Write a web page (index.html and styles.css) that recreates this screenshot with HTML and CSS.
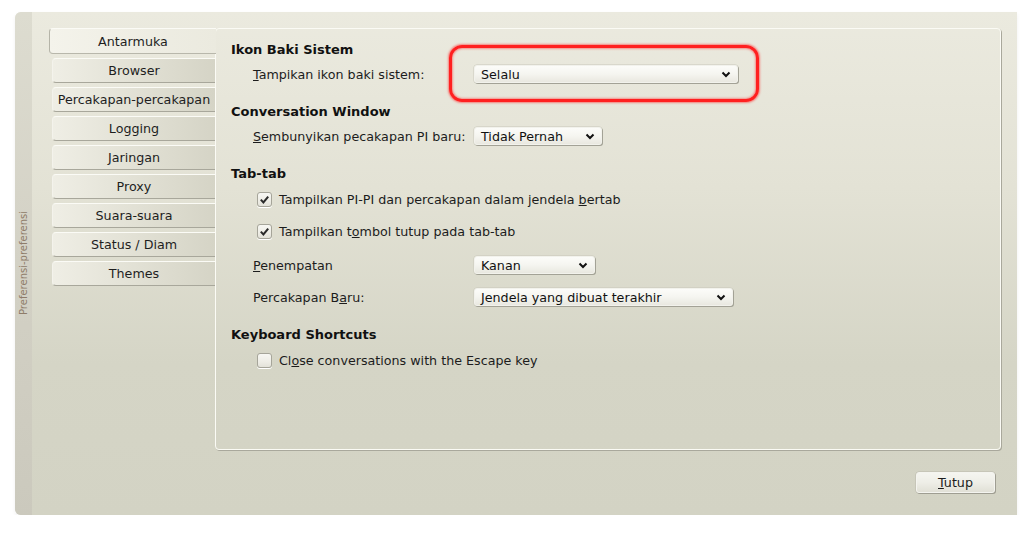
FILE: index.html
```html
<!DOCTYPE html>
<html>
<head>
<meta charset="utf-8">
<link rel="stylesheet" href="styles.css">
</head>
<body>
<div class="window">
  <div class="sidebar"><span class="vtitle">Preferensi-preferensi</span></div>
  <div class="main">
    <div class="top">
      <div class="tabs">
        <div class="tab active">Antarmuka</div>
        <div class="tab">Browser</div>
        <div class="tab">Percakapan-percakapan</div>
        <div class="tab">Logging</div>
        <div class="tab">Jaringan</div>
        <div class="tab">Proxy</div>
        <div class="tab">Suara-suara</div>
        <div class="tab">Status / Diam</div>
        <div class="tab">Themes</div>
      </div>
      <div class="panel">
        <div class="section">
          <div class="heading">Ikon Baki Sistem</div>
          <div class="row"><span class="label"><u>T</u>ampikan ikon baki sistem:</span><div class="combo w1"><span>Selalu</span><svg class="chev" width="10" height="7" viewBox="0 0 10 7"><path d="M1.5 1.5 L5 5 L8.5 1.5" fill="none" stroke="#111" stroke-width="2"/></svg></div></div>
        </div>
        <div class="section">
          <div class="heading">Conversation Window</div>
          <div class="row"><span class="label"><u>S</u>embunyikan pecakapan PI baru:</span><div class="combo w2"><span>Tidak Pernah</span><svg class="chev" width="10" height="7" viewBox="0 0 10 7"><path d="M1.5 1.5 L5 5 L8.5 1.5" fill="none" stroke="#111" stroke-width="2"/></svg></div></div>
        </div>
        <div class="section">
          <div class="heading">Tab-tab</div>
          <div class="check-row"><span class="cb checked"><svg width="15" height="15" viewBox="0 0 15 15"><path d="M3.8 7.6 L6.4 10.4 L11.2 4.6" fill="none" stroke="#2a2a2a" stroke-width="2"/></svg></span><span>Tampilkan PI-PI dan percakapan dalam jendela <u>b</u>ertab</span></div>
          <div class="check-row"><span class="cb checked"><svg width="15" height="15" viewBox="0 0 15 15"><path d="M3.8 7.6 L6.4 10.4 L11.2 4.6" fill="none" stroke="#2a2a2a" stroke-width="2"/></svg></span><span>Tampilkan t<u>o</u>mbol tutup pada tab-tab</span></div>
          <div class="row tall"><span class="label"><u>P</u>enempatan</span><div class="combo w3"><span>Kanan</span><svg class="chev" width="10" height="7" viewBox="0 0 10 7"><path d="M1.5 1.5 L5 5 L8.5 1.5" fill="none" stroke="#111" stroke-width="2"/></svg></div></div>
          <div class="row short"><span class="label">Percakapan B<u>a</u>ru:</span><div class="combo w4"><span>Jendela yang dibuat terakhir</span><svg class="chev" width="10" height="7" viewBox="0 0 10 7"><path d="M1.5 1.5 L5 5 L8.5 1.5" fill="none" stroke="#111" stroke-width="2"/></svg></div></div>
        </div>
        <div class="section last">
          <div class="heading">Keyboard Shortcuts</div>
          <div class="check-row"><span class="cb"></span><span>Cl<u>o</u>se conversations with the Escape key</span></div>
        </div>
      </div>
    </div>
    <div class="footer"><button class="btn"><u>T</u>utup</button></div>
  </div>
  <div class="highlight"></div>
</div>
</body>
</html>
```

FILE: styles.css
```css
html, body {
  margin: 0;
  padding: 0;
  background: #ffffff;
}
body {
  font-family: "DejaVu Sans", "Liberation Sans", sans-serif;
  font-size: 12.7px;
  color: #1c1c1c;
}
.window {
  position: relative;
  margin: 12px 0 0 15px;
  width: 1002px;
  height: 503px;
  display: flex;
  border-radius: 6px 0 0 6px;
  background: linear-gradient(to bottom, #ebeadf 0%, #e3e2d5 35%, #d5d5c6 70%, #d3d3c4 100%);
  box-shadow: 0 2px 4px rgba(0,0,0,0.06);
}
.sidebar {
  width: 17px;
  flex: none;
  border-radius: 6px 0 0 6px;
  background: linear-gradient(to bottom, #dddcd0 0%, #d3d1c5 50%, #cbc9bd 100%);
  display: flex;
  align-items: center;
  justify-content: center;
}
.vtitle {
  writing-mode: vertical-rl;
  transform: rotate(180deg);
  font-size: 10px;
  color: #8e7c69;
  margin-top: -2px;
}
.main {
  flex: 1;
  display: flex;
  flex-direction: column;
  padding: 16px 16px 0 17px;
}
.top {
  display: flex;
  height: 422px;
}
.tabs {
  width: 166px;
  flex: none;
  display: flex;
  flex-direction: column;
  gap: 4px;
}
.tab {
  height: 25px;
  margin-left: 3px;
  box-sizing: border-box;
  border-radius: 4px 0 0 4px;
  border-top: 1px solid #fbfbf6;
  border-left: 1px solid #f4f3ec;
  border-bottom: 1px solid #a8a79b;
  background: linear-gradient(to right, #efeee5 0%, #e2e1d5 50%, #d5d4c6 100%);
  display: flex;
  align-items: center;
  justify-content: center;
  color: #1e1e1e;
  white-space: nowrap;
}
.tab.active {
  height: 26px;
  margin-left: 0;
  margin-right: -1px;
  position: relative;
  z-index: 1;
  border-bottom: 1px solid #b8b7ab;
  border-left: 1px solid #b5b4a8;
  background: linear-gradient(to right, #f4f3eb 0%, #eeede3 60%, #ebeadf 100%);
}
.panel {
  flex: 1;
  box-sizing: border-box;
  border: 1px solid #fbfbf5;
  border-radius: 4px;
  box-shadow: 1px 1px 0 #a9a89c;
  padding: 10px 15px 0 15px;
  display: flex;
  flex-direction: column;
}
.section + .section {
  margin-top: 12px;
}
.section.last {
  margin-top: 13px;
}
.heading {
  height: 20px;
  line-height: 22px;
  font-size: 13px;
  font-weight: bold;
  color: #111;
}
.row {
  display: grid;
  grid-template-columns: 221px auto;
  align-items: center;
  padding-left: 22px;
  height: 30px;
}
.row.tall { height: 36px; }
.row.short { height: 28px; }
.label { white-space: nowrap; }
.combo {
  height: 18px;
  box-sizing: border-box;
  border-radius: 3px;
  border: 1px solid #f2f2ec;
  box-shadow: 1px 1px 0 #a3a296, 0 0 0 0.5px #c9c8bc;
  background: linear-gradient(to bottom, #fcfcf9 0%, #f5f5f0 50%, #e9e8e0 100%);
  display: flex;
  align-items: center;
  justify-content: space-between;
  padding: 0 6px 0 6px;
  color: #111;
  white-space: nowrap;
}
.w1 { width: 264px; }
.w2 { width: 128px; }
.w3 { width: 121px; }
.w4 { width: 259px; }
.chev { flex: none; margin-top: 1px; }
.check-row {
  display: flex;
  align-items: center;
  height: 32px;
  padding-left: 26px;
  gap: 7px;
  white-space: nowrap;
}
.cb {
  width: 15px;
  height: 15px;
  box-sizing: border-box;
  border-radius: 3px;
  border: 1px solid #a6a59a;
  background: linear-gradient(to bottom, #f7f7f3 0%, #eeede6 60%, #e3e2d9 100%);
  box-shadow: 0 1px 0 #ffffff;
  display: flex;
  align-items: center;
  justify-content: center;
  flex: none;
}
.cb svg { display: block; margin: -1px; }
.footer {
  display: flex;
  justify-content: flex-end;
  padding: 22px 6px 0 0;
}
.btn {
  width: 79px;
  height: 21px;
  box-sizing: border-box;
  border-radius: 3px;
  border: 1px solid #f4f4ef;
  box-shadow: 1px 1px 0 #9f9e92, 0 0 0 0.5px #b9b8ac;
  background: linear-gradient(to bottom, #f5f5f0 0%, #eeeee7 50%, #e1e0d6 100%);
  font-family: "DejaVu Sans", "Liberation Sans", sans-serif;
  font-size: 12.7px;
  color: #1c1c1c;
  padding: 0;
}
.highlight {
  position: absolute;
  left: 434px;
  top: 33px;
  width: 310px;
  height: 57px;
  box-sizing: border-box;
  border: 3px solid #ff2020;
  border-radius: 13px;
  box-shadow: 0 0 2px 1px rgba(255,60,60,0.6), inset 0 0 2px 1px rgba(255,60,60,0.5);
}
```
